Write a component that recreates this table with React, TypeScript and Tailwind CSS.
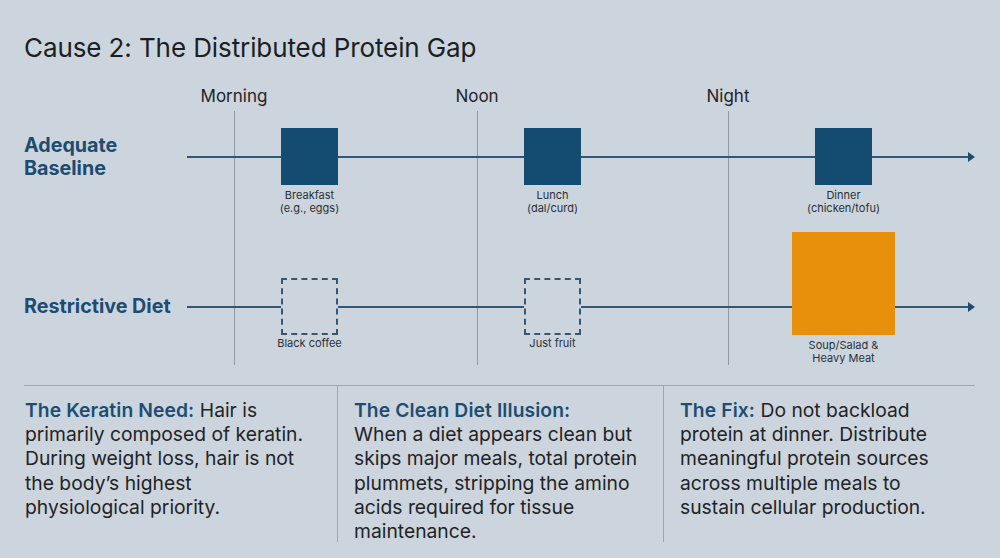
import React from "react";

type Meal = {
  label: string[];
  kind: "solid" | "dashed" | "heavy";
};

interface Track {
  name: string[];
  segments: number[];
  meals: Meal[];
}

const tracks: Track[] = [
  {
    name: ["Adequate", "Baseline"],
    segments: [94, 186, 234, 96],
    meals: [
      { label: ["Breakfast", "(e.g., eggs)"], kind: "solid" },
      { label: ["Lunch", "(dal/curd)"], kind: "solid" },
      { label: ["Dinner", "(chicken/tofu)"], kind: "solid" },
    ],
  },
  {
    name: ["Restrictive Diet"],
    segments: [94, 186, 211, 73],
    meals: [
      { label: ["Black coffee"], kind: "dashed" },
      { label: ["Just fruit"], kind: "dashed" },
      { label: ["Soup/Salad &", "Heavy Meat"], kind: "heavy" },
    ],
  },
];

const times = [
  { label: "Morning", x: 47 },
  { label: "Noon", x: 290 },
  { label: "Night", x: 541 },
];

const notes = [
  {
    title: "The Keratin Need:",
    lines: [
      " Hair is",
      "primarily composed of keratin.",
      "During weight loss, hair is not",
      "the body’s highest",
      "physiological priority.",
    ],
  },
  {
    title: "The Clean Diet Illusion:",
    lines: [
      "",
      "When a diet appears clean but",
      "skips major meals, total protein",
      "plummets, stripping the amino",
      "acids required for tissue",
      "maintenance.",
    ],
  },
  {
    title: "The Fix:",
    lines: [
      " Do not backload",
      "protein at dinner. Distribute",
      "meaningful protein sources",
      "across multiple meals to",
      "sustain cellular production.",
    ],
  },
];

function Segment({ width }: { width: number }) {
  return <div className="h-[2px] flex-none bg-[#2d5677]" style={{ width }} />;
}

function MealBlock({ meal }: { meal: Meal }) {
  const box =
    meal.kind === "solid"
      ? "h-[57px] w-[57px] bg-[#144b71]"
      : meal.kind === "dashed"
        ? "h-[57px] w-[57px] border-2 border-dashed border-[#3a566e] bg-[#ccd5dd]"
        : "h-[103px] w-[103px] self-end bg-[#e88f0b]";
  return (
    <div className={`relative flex-none ${box}`}>
      <div className="absolute left-1/2 top-full mt-[4px] -translate-x-1/2 whitespace-nowrap text-center text-[11px] leading-[13px] text-[#2a3036]">
        {meal.label.map((l) => (
          <div key={l}>{l}</div>
        ))}
      </div>
    </div>
  );
}

export default function App() {
  return (
    <div className="h-[558px] w-[1000px] overflow-hidden bg-[#ccd5dd] px-6 pt-8 font-['Inter','Noto_Sans',sans-serif]">
      <h1 className="text-[26px] font-normal leading-8 tracking-[-0.1px] text-[#1b1e22]">
        Cause 2: The Distributed Protein Gap
      </h1>

      <div className="mt-[22px] flex">
        <div className="w-[163px] flex-none" />
        <div className="relative h-5 w-[788px]">
          {times.map((t) => (
            <span
              key={t.label}
              className="absolute top-0 -translate-x-1/2 text-[17px] leading-5 text-[#1f2328]"
              style={{ left: t.x }}
            >
              {t.label}
            </span>
          ))}
        </div>
      </div>

      <div className="relative mt-[5px] h-[254px] pt-[17px]">
        {times.map((t) => (
          <div
            key={t.label}
            className="absolute top-0 h-[254px] w-px bg-[#8e9aa4]"
            style={{ left: 163 + t.x }}
          />
        ))}
        {tracks.map((track, ti) => (
          <div key={ti} className={`relative flex h-[57px] ${ti === 1 ? "mt-[93px]" : ""}`}>
            <div className="flex w-[163px] flex-none flex-col justify-center text-[19.7px] font-bold leading-[23px] text-[#1e4b70]">
              {track.name.map((n) => (
                <div key={n}>{n}</div>
              ))}
            </div>
            <div className="flex w-[788px] items-center">
              <Segment width={track.segments[0]} />
              <MealBlock meal={track.meals[0]} />
              <Segment width={track.segments[1]} />
              <MealBlock meal={track.meals[1]} />
              <Segment width={track.segments[2]} />
              <MealBlock meal={track.meals[2]} />
              <Segment width={track.segments[3]} />
              <svg width="7" height="10" viewBox="0 0 7 10" className="flex-none">
                <path d="M0 0 L7 5 L0 10 Z" fill="#1f4d70" />
              </svg>
            </div>
          </div>
        ))}
      </div>

      <div className="mt-5 grid w-[951px] grid-cols-[313px_326px_312px] border-t border-[#9aa6b0]">
        {notes.map((n, i) => (
          <div
            key={n.title}
            className={`h-[156px] pt-3 text-[19.3px] leading-[24.2px] text-[#1f2326] ${
              i === 0 ? "pl-px" : "border-l border-[#9aa6b0] pl-4"
            }`}
          >
            <span className="font-semibold tracking-[0.1px] text-[#1d4d73]">{n.title}</span>
            {n.lines.map((l, li) =>
              li === 0 ? (
                <span key={li}>{l}</span>
              ) : (
                <React.Fragment key={li}>
                  <br />
                  {l}
                </React.Fragment>
              )
            )}
          </div>
        ))}
      </div>
    </div>
  );
}
